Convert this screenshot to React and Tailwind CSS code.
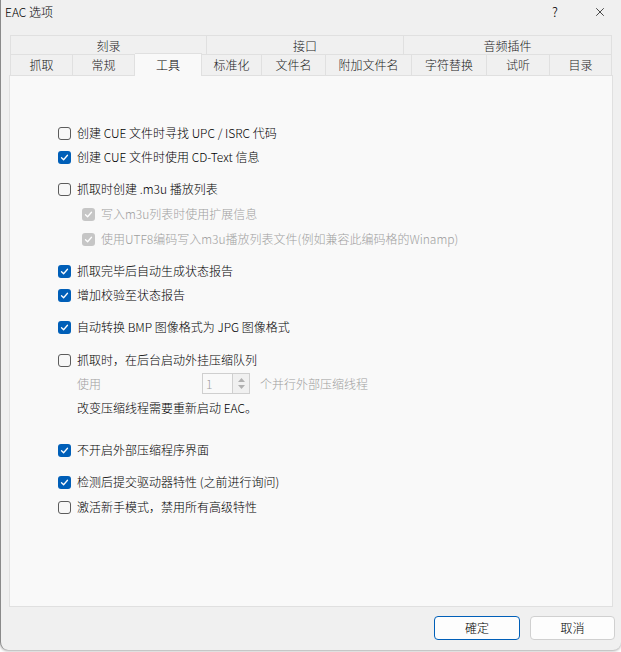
import { X } from "lucide-react";

const font = { fontFamily: '"Noto Sans CJK SC", "Noto Sans", sans-serif' };

const topTabs = [
  { label: "刻录", w: "w-[197px]" },
  { label: "接口", w: "w-[197px]" },
  { label: "音频插件", w: "w-[208px]" },
];

const tabs = [
  { label: "抓取", w: "w-[63px]" },
  { label: "常规", w: "w-[62px]" },
  { label: "工具", w: "w-[67px]", active: true },
  { label: "标准化", w: "w-[60px]" },
  { label: "文件名", w: "w-[64px]" },
  { label: "附加文件名", w: "w-[86px]" },
  { label: "字符替换", w: "w-[75px]" },
  { label: "试听", w: "w-[63px]" },
  { label: "目录", w: "w-[62px]" },
];

function Check({ checked, disabled }) {
  if (disabled) {
    return (
      <span className="w-[13px] h-[13px] rounded-[3px] bg-[#c6c6c6] flex items-center justify-center shrink-0">
        <svg width="9" height="9" viewBox="0 0 9 9" fill="none">
          <path d="M1.5 4.7 3.6 6.7 7.5 2.3" stroke="#fff" strokeWidth="1.3" strokeLinecap="round" strokeLinejoin="round" />
        </svg>
      </span>
    );
  }
  if (checked) {
    return (
      <span className="w-[13px] h-[13px] rounded-[3px] bg-[#005fb8] flex items-center justify-center shrink-0">
        <svg width="9" height="9" viewBox="0 0 9 9" fill="none">
          <path d="M1.5 4.7 3.6 6.7 7.5 2.3" stroke="#fff" strokeWidth="1.3" strokeLinecap="round" strokeLinejoin="round" />
        </svg>
      </span>
    );
  }
  return <span className="w-[13px] h-[13px] rounded-[3px] border border-[#5c5c5c] bg-[#f7f7f7] shrink-0" />;
}

function Row({ label, checked, disabled, indent, className }) {
  return (
    <div className={`flex items-center h-[24px] gap-[6px] ${indent ? "pl-[24px] gap-[5px]" : ""} ${className || ""}`}>
      <Check checked={checked} disabled={disabled} />
      <span className={disabled ? "text-[#a0a0a0]" : "text-black"}>{label}</span>
    </div>
  );
}

export default function App() {
  return (
    <div className="w-[621px] h-[652px] bg-white text-[12px] font-light" style={font}>
      <div className="w-[621px] h-[650px] bg-[#f0f0f0] border-l border-[#8a8a8a] rounded-b-[8px] shadow-[0_1px_3px_rgba(0,0,0,0.35)] flex flex-col">
        {/* TITLE BAR */}
        <div className="h-[24px] flex items-center pl-[4px] pr-[14px] text-[12px] text-black">
          <span>EAC 选项</span>
          <span className="ml-auto w-[20px] text-center text-[13px]">?</span>
          <X className="ml-[28px] w-[14px] h-[14px]" strokeWidth={1.2} />
        </div>

        {/* TABS */}
        <div className="pl-[9px] mt-[11px] text-[#1a1a1a]">
          <div className="flex h-[19px]">
            {topTabs.map((t) => (
              <div
                key={t.label}
                className={`${t.w} h-full flex items-center justify-center pt-px bg-[#f0f0f0] border-t border-r border-[#e0e0e0] first:border-l`}
              >
                {t.label}
              </div>
            ))}
          </div>
          <div className="flex h-[21px] items-end">
            {tabs.map((t) =>
              t.active ? (
                <div
                  key={t.label}
                  className={`${t.w} h-[23px] -mt-[2px] flex items-center justify-center bg-[#f9f9f9] border-t border-r border-[#e0e0e0] relative z-10 text-black -mb-px`}
                >
                  {t.label}
                </div>
              ) : (
                <div
                  key={t.label}
                  className={`${t.w} h-full flex items-center justify-center bg-[#f0f0f0] border-t border-r border-[#e0e0e0] first:border-l`}
                >
                  {t.label}
                </div>
              )
            )}
          </div>
        </div>

        {/* PANEL */}
        <div className="mx-[8px] h-[532px] bg-[#f9f9f9] border border-[#e0e0e0] pl-[48px] pt-[45px] flex flex-col">
          <Row label="创建 CUE 文件时寻找 UPC / ISRC 代码" />
          <Row label="创建 CUE 文件时使用 CD-Text 信息" checked />
          <Row label="抓取时创建 .m3u 播放列表" className="mt-[8px]" />
          <Row label="写入m3u列表时使用扩展信息" disabled indent className="mt-[1px]" />
          <Row label="使用UTF8编码写入m3u播放列表文件(例如兼容此编码格的Winamp)" disabled indent className="mt-[1px]" />
          <Row label="抓取完毕后自动生成状态报告" checked className="mt-[8px]" />
          <Row label="增加校验至状态报告" checked />
          <Row label="自动转换 BMP 图像格式为 JPG 图像格式" checked className="mt-[8px]" />
          <Row label="抓取时，在后台启动外挂压缩队列" className="mt-[9px]" />

          <div className="flex items-center h-[23px] pl-[19px] text-[#a0a0a0]">
            <span className="w-[125px]">使用</span>
            <div className="flex h-[21px] w-[48px] border border-[#cfcfcf] bg-[#f9f9f9]">
              <span className="flex-1 pl-[3px] flex items-center">1</span>
              <div className="w-[17px] border-l border-[#cfcfcf] flex flex-col items-center justify-center gap-[3px] bg-[#f0f0f0]">
                <svg width="7" height="4" viewBox="0 0 7 4"><path d="M0 4 3.5 0 7 4z" fill="#b0b0b0" /></svg>
                <svg width="7" height="4" viewBox="0 0 7 4"><path d="M0 0 3.5 4 7 0z" fill="#b0b0b0" /></svg>
              </div>
            </div>
            <span className="ml-[10px]">个并行外部压缩线程</span>
          </div>

          <div className="flex items-center h-[24px] pl-[19px] mt-[1px] text-black">改变压缩线程需要重新启动 EAC。</div>

          <Row label="不开启外部压缩程序界面" checked className="mt-[18px]" />
          <Row label="检测后提交驱动器特性 (之前进行询问)" checked className="mt-[8px]" />
          <Row label="激活新手模式，禁用所有高级特性" className="mt-[1px]" />
        </div>

        {/* BUTTONS */}
        <div className="flex justify-end gap-[10px] pr-[6px] mt-[9px]">
          <button className="w-[86px] h-[24px] rounded-[4px] bg-[#fdfdfd] border border-[#005fb8] text-black text-[12px]">
            確定
          </button>
          <button className="w-[85px] h-[24px] rounded-[4px] bg-[#fdfdfd] border border-[#d0d0d0] text-black text-[12px]">
            取消
          </button>
        </div>
      </div>
    </div>
  );
}
